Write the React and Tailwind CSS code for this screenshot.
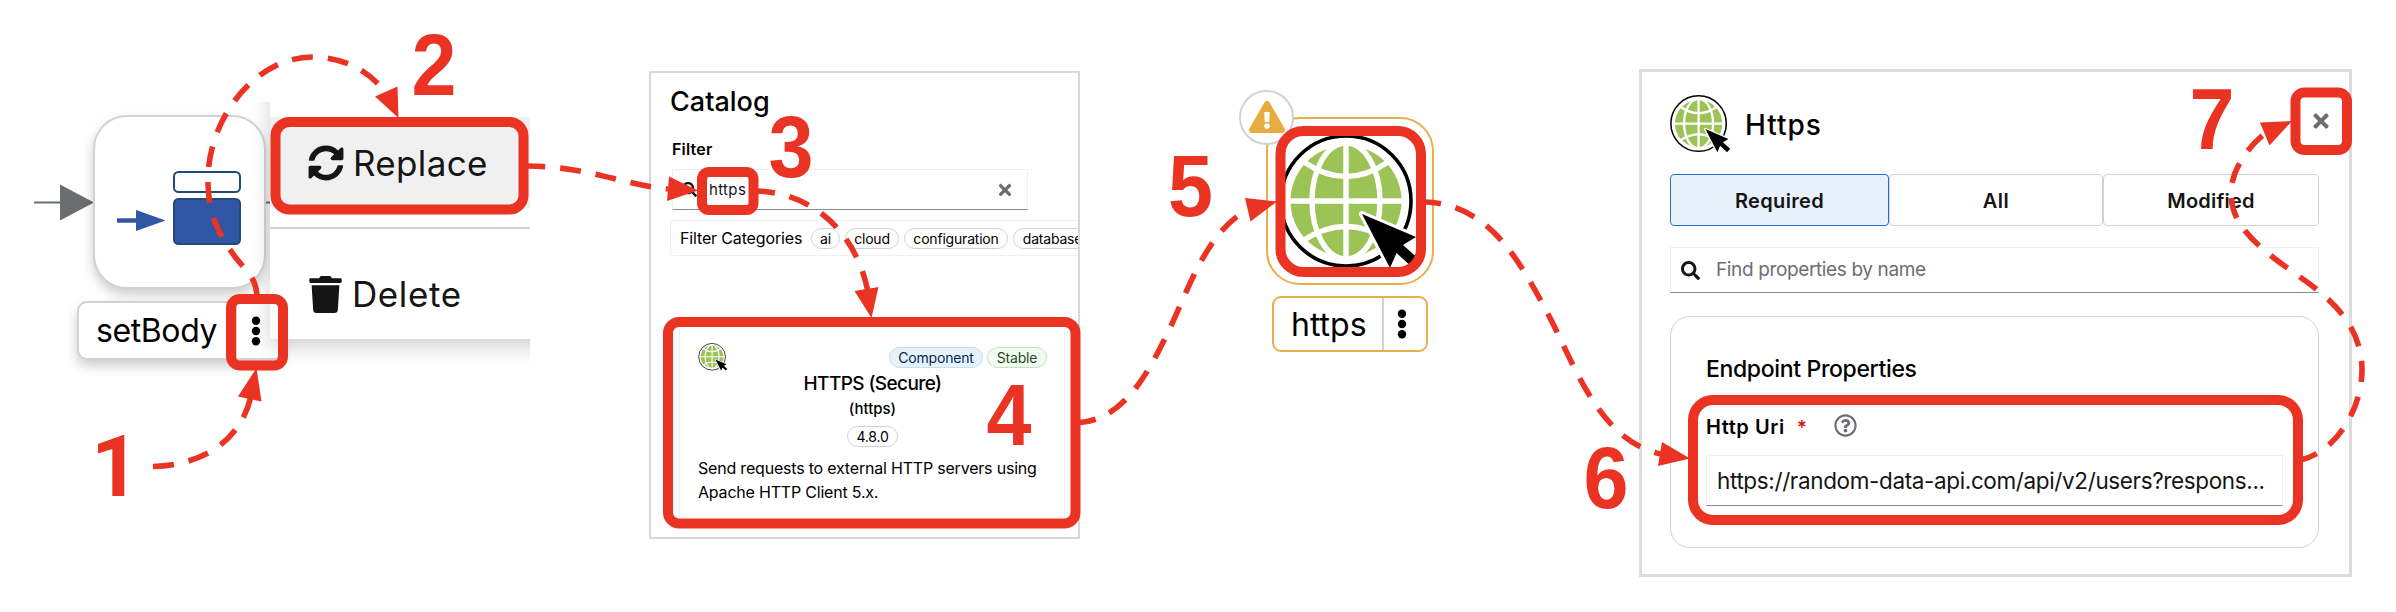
import React from "react";
import {
  FaSyncAlt,
  FaTrash,
  FaSearch,
  FaTimes,
  FaExclamationTriangle,
  FaRegQuestionCircle,
} from "react-icons/fa";

function Globe({ className }) {
  const cursor = "16,13 70,36 57,44 74,59 67,67 50.5,52 44,67";
  return (
    <svg className={className} viewBox="-67 -67 143 136" aria-hidden="true">
      <circle r="65" fill="#fff" stroke="#000" strokeWidth="3.6" />
      <circle r="55.5" fill="#9bc356" />
      <g fill="none" stroke="#fff" strokeWidth="5.4">
        <path d="M0-58V58M-58 0H58" />
        <ellipse rx="34" ry="58" />
        <path d="M-42-39Q0-10 42-39M-42 39Q0 12 42 39" />
      </g>
      <polygon points={cursor} fill="#fff" stroke="#fff" strokeWidth="6" strokeLinejoin="round" />
      <polygon points={cursor} fill="#000" />
    </svg>
  );
}

function Chip({ className = "", children }) {
  return (
    <span
      className={`flex h-[21px] shrink-0 items-center justify-center whitespace-nowrap rounded-full border text-[14px] tracking-[-0.2px] ${className}`}
    >
      {children}
    </span>
  );
}

function Kebab({ className }) {
  return (
    <svg className={className} viewBox="0 0 10 30" aria-hidden="true">
      <circle cx="5" cy="4.7" r="4.2" />
      <circle cx="5" cy="15" r="4.2" />
      <circle cx="5" cy="25.3" r="4.2" />
    </svg>
  );
}

function SetBodyStep() {
  return (
    <section className="relative h-[612px] w-[649px] shrink-0">
      <svg className="absolute left-[34px] top-[182px]" width="240" height="40" aria-hidden="true">
        <path d="M0 20.5H30M228 20.5H240" stroke="#6a6e73" strokeWidth="2" />
        <path d="M26 2.5L60 20.5L26 38.5Z" fill="#6a6e73" />
      </svg>
      <div className="absolute left-[93px] top-[115px] h-[174px] w-[173px] rounded-[34px] border-2 border-[#d2d2d2] bg-white shadow-[0_6px_12px_rgba(0,0,0,0.2)]">
        <svg className="h-full w-full" viewBox="95 117 169 170" aria-hidden="true">
          <rect x="174" y="172" width="66" height="20" rx="4.5" fill="#fff" stroke="#22497a" strokeWidth="2" />
          <rect x="174" y="199" width="66" height="45" rx="4.5" fill="#3057a5" stroke="#22497a" strokeWidth="2" />
          <path d="M117 220.5H138" stroke="#3057a5" strokeWidth="4.5" />
          <path d="M136 210L165.5 220.5L136 231Z" fill="#3057a5" />
        </svg>
      </div>
      <div className="absolute left-[77px] top-[301px] flex h-[59px] w-[206px] items-center rounded-[10px] border-2 border-[#d2d2d2] bg-white pl-[17px] shadow-[0_6px_12px_rgba(0,0,0,0.2)]">
        <span className="w-[139px] pt-[1px] text-[32px] leading-[40px] tracking-[-0.4px]">setBody</span>
        <div className="flex h-full items-center border-l-2 border-[#d2d2d2] pl-[14px]">
          <Kebab className="h-[30px] w-[10px]" />
        </div>
      </div>

      {/* Context menu, clipped on its left, top and right */}
      <div className="absolute left-[240px] top-[102px] h-[268px] w-[290px] overflow-hidden pl-[30px]">
        <div className="-mt-[40px] flex h-[277px] w-[300px] flex-col bg-white pt-[55px] text-[35px] leading-[44px] text-[#151515] shadow-[0_8px_18px_rgba(0,0,0,0.18)]">
          <div className="flex h-[91px] items-center gap-[9px] bg-[#f0f0f0] pl-[38px]">
            <FaSyncAlt className="size-[36px]" />
            <span className="tracking-[0.34px]">Replace</span>
          </div>
          <div className="mt-[19px] h-[2px] bg-[#d2d2d2]" />
          <div className="flex flex-1 items-center gap-[10px] pl-[39px] pt-[20px]">
            <FaTrash className="h-[37px] w-[33px]" />
            <span className="tracking-[0.6px]">Delete</span>
          </div>
        </div>
      </div>
    </section>
  );
}

function Catalog() {
  return (
    <section className="mt-[71px] flex h-[468px] w-[431px] shrink-0 flex-col overflow-hidden border-2 border-[#d8d8d8] bg-white pl-[19px] pt-[13px]">
      <h2 className="text-[27px] font-medium leading-[32px]">Catalog</h2>
      <label className="ml-[2px] mt-[19px] text-[16px] font-semibold leading-[24px] tracking-[0.2px]">Filter</label>
      <div className="ml-[2px] mt-[8px] flex h-[41px] w-[356px] items-center border border-[#f0f0f0] border-b-[#8a8d90] pl-[9px] pr-[13px] text-[#151515]">
        <FaSearch className="size-[15px]" />
        <span className="ml-[12px] flex-1 pt-[1px] text-[15px] tracking-[0.35px]">https</span>
        <FaTimes className="size-[18px] text-[#6a6e73]" />
      </div>
      <div className="mt-[10px] flex h-[36px] w-[440px] items-center gap-[5px] rounded-[4px] border border-[#f0f0f0] pl-[9px]">
        <span className="mr-[5px] w-[121px] shrink-0 whitespace-nowrap text-[16px] tracking-[-0.15px]">Filter Categories</span>
        <Chip className="w-[29px] border-[#d2d2d2]">ai</Chip>
        <Chip className="w-[54px] border-[#d2d2d2]">cloud</Chip>
        <Chip className="w-[104px] border-[#d2d2d2]">configuration</Chip>
        <Chip className="w-[79px] border-[#d2d2d2]">database</Chip>
      </div>
      <div className="ml-[9px] mt-[72px] flex h-[190px] w-[386px] flex-col border-x border-[#f0f0f0] pl-[18px] pr-[17px] pt-[15px]">
        <div className="flex h-[28px] items-center gap-[4px]">
          <Globe className="mr-auto h-[28px] w-[30px]" />
          <Chip className="w-[94px] border-[#bee1f4] bg-[#e7f1fa] text-[#002952]">Component</Chip>
          <Chip className="w-[60px] border-[#bde5b8] bg-[#f3faf2] text-[#1e4f18]">Stable</Chip>
        </div>
        <h3 className="mt-[1px] text-center text-[19px] font-medium leading-[24px] tracking-[-0.6px]">HTTPS (Secure)</h3>
        <p className="mt-[1px] text-center text-[15px] font-medium leading-[24px]">(https)</p>
        <div className="mt-[5px] flex justify-center">
          <Chip className="w-[51px] border-[#d2d2d2]">4.8.0</Chip>
        </div>
        <p className="mt-[9px] whitespace-nowrap text-[16px] leading-[24px] tracking-[-0.2px]">
          Send requests to external HTTP servers using
          <br />
          Apache HTTP Client 5.x.
        </p>
      </div>
    </section>
  );
}

function HttpsStep() {
  return (
    <section className="relative h-[612px] w-[559px] shrink-0">
      <div className="absolute left-[186px] top-[117px] h-[168px] w-[168px] rounded-[34px] border-2 border-[#e6b04a] bg-white">
        <Globe className="ml-[10.5px] mt-[14.5px] h-[136px] w-[143px]" />
      </div>
      <div className="absolute left-[159px] top-[90px] flex size-[55px] justify-center rounded-full border-2 border-[#d2d2d2] bg-white pt-[8px]">
        <FaExclamationTriangle className="h-[34px] w-[36px] text-[#e6ac3f]" />
      </div>
      <div className="absolute left-[192px] top-[296px] flex h-[56px] w-[156px] items-center rounded-[9px] border-2 border-[#e6b04a] bg-white pl-[17px]">
        <span className="w-[91px] pt-[1px] text-[32px] leading-[40px]">https</span>
        <div className="flex h-full items-center border-l-2 border-[#d2d2d2] pl-[13px]">
          <Kebab className="h-[30px] w-[10px]" />
        </div>
      </div>
    </section>
  );
}

function Properties() {
  return (
    <section className="mt-[69px] flex h-[508px] w-[713px] shrink-0 flex-col border-[3px] border-[#dcdcdc] bg-white pl-[28px] pt-[23px]">
      <div className="flex h-[58px] w-[663px] items-center pr-[1px]">
        <Globe className="h-[58px] w-[61px]" />
        <h2 className="ml-[14px] flex-1 pt-[1px] text-[28px] font-medium tracking-[1px]">Https</h2>
        <FaTimes className="size-[22px] -translate-y-[3px] text-[#6a6e73]" />
      </div>
      <div className="mt-[21px] flex h-[52px] w-[649px] text-[20px] font-semibold text-[#151515]">
        <div className="flex w-[219px] items-center justify-center rounded-[4px] border border-[#2b6fcf] bg-[#e7f1fa] pt-[1px] tracking-[0.35px]">
          Required
        </div>
        <div className="flex w-[214px] items-center justify-center rounded-[4px] border border-[#d2d2d2] pt-[1px] tracking-[0.5px]">All</div>
        <div className="flex w-[216px] items-center justify-center rounded-[4px] border border-[#d2d2d2] pt-[1px] tracking-[0.2px]">Modified</div>
      </div>
      <div className="mt-[21px] flex h-[46px] w-[649px] items-center border border-[#f0f0f0] border-b-[#8a8d90] pl-[10px]">
        <FaSearch className="size-[19px] text-[#151515]" />
        <span className="ml-[16px] pt-[1px] text-[19px] tracking-[-0.37px] text-[#6a6e73]">Find properties by name</span>
      </div>
      <div className="mt-[23px] flex h-[232px] w-[649px] flex-col rounded-[20px] border border-[#d2d2d2] pl-[35px] pt-[38px]">
        <h3 className="text-[23px] font-medium leading-[28px] tracking-[-0.35px]">Endpoint Properties</h3>
        <div className="mt-[30px] flex h-[28px] items-center">
          <span className="text-[20px] font-semibold tracking-[0.55px]">Http Uri</span>
          <span className="ml-[12px] w-[37px] pt-[2px] text-[19px] font-semibold text-[#c9190b]">*</span>
          <FaRegQuestionCircle className="size-[23px] -translate-y-[2px] text-[#6a6e73]" />
        </div>
        <div className="mt-[14px] flex h-[51px] w-[577px] items-center whitespace-nowrap border border-[#f0f0f0] border-b-[#8a8d90] pl-[10px] text-[22.5px] tracking-[-0.37px] text-[#151515]">
          https://random-data-api.com/api/v2/users?respons...
        </div>
      </div>
    </section>
  );
}

function Annotations() {
  return (
    <svg
      className="pointer-events-none absolute left-0 top-0"
      width="2396"
      height="612"
      viewBox="0 0 2396 612"
      fill="none"
      aria-hidden="true"
    >
      <g stroke="#ea3323" strokeWidth="10">
        <rect x="231" y="299" width="52" height="66.5" rx="9" />
        <rect x="275.5" y="122" width="248" height="87.5" rx="14" />
        <rect x="702" y="172" width="51.5" height="38" rx="7" />
        <rect x="668" y="322" width="407.5" height="201.5" rx="11" />
        <rect x="1280.5" y="131" width="140.5" height="141" rx="23" />
        <rect x="1693" y="400" width="605" height="120" rx="20" />
        <rect x="2295.5" y="92.5" width="51.5" height="57.5" rx="9" />
      </g>
      <g stroke="#ea3323" strokeWidth="5.6" strokeDasharray="21 15">
        <path d="M153 466.5C204 465 241 440 251 396" />
        <path d="M257 295C255 276 247 272 236 258C221 238 209 218 208 184C206 120 255 57 312 57C345 57 370 72 385 92" strokeDashoffset="3" />
        <path d="M528 166C590 167 620 184 668 189" strokeDashoffset="4" />
        <path d="M758 191C820 194 858 240 868 292" strokeDashoffset="4" />
        <path d="M1080 422.5C1125 419 1150 370 1170 328C1190 285 1208 230 1249 209" strokeDashoffset="5" />
        <path d="M1425 202C1490 204 1520 262 1548 314C1575 365 1600 445 1666 455" strokeDashoffset="5" />
        <path d="M2302 459.5C2335 452 2362 410 2362 370C2362 325 2330 298 2300 277C2262 250 2231 228 2231 193C2231 170 2248 146 2268 131" strokeDashoffset="5" />
      </g>
      <g fill="#ea3323">
        <path d="M256.500 368L238 396.500L261.500 401.500Z" />
        <path d="M398.500 118L375 96.500L397.500 86.500Z" />
        <path d="M698 190.500L669 176.500L667 201Z" />
        <path d="M871.500 318L854.500 291L878.500 287Z" />
        <path d="M1277 201.500L1245 198L1250.500 221.500Z" />
        <path d="M1690 458.500L1662 442L1658 466Z" />
        <path d="M2292 121L2260 122.500L2269.500 145.500Z" />
      </g>
    </svg>
  );
}

const steps = [
  { n: "2", x: 411.5, y: 95 },
  { n: "3", x: 768.5, y: 177 },
  { n: "4", x: 986.5, y: 445 },
  { n: "5", x: 1168, y: 216 },
  { n: "6", x: 1583.5, y: 507.5 },
  { n: "7", x: 2189.5, y: 148.5 },
];

function StepNumbers() {
  return (
    <svg className="pointer-events-none absolute left-0 top-0" width="2396" height="612" viewBox="0 0 2396 612">
      <g fill="#ea3323" fontWeight="700" fontSize="87" fontFamily="'Liberation Sans', sans-serif">
        <text transform="translate(91 496)" fontFamily="Roboto, sans-serif" fontSize="85">
          1
        </text>
        {steps.map((s) => (
          <text key={s.n} transform={`translate(${s.x} ${s.y}) scale(0.93 1)`}>
            {s.n}
          </text>
        ))}
      </g>
    </svg>
  );
}

export default function App() {
  return (
    <main className="relative flex h-[612px] w-[2396px] items-start overflow-hidden bg-white font-['Inter',sans-serif] text-black">
      <SetBodyStep />
      <Catalog />
      <HttpsStep />
      <Properties />
      <Annotations />
      <StepNumbers />
    </main>
  );
}
